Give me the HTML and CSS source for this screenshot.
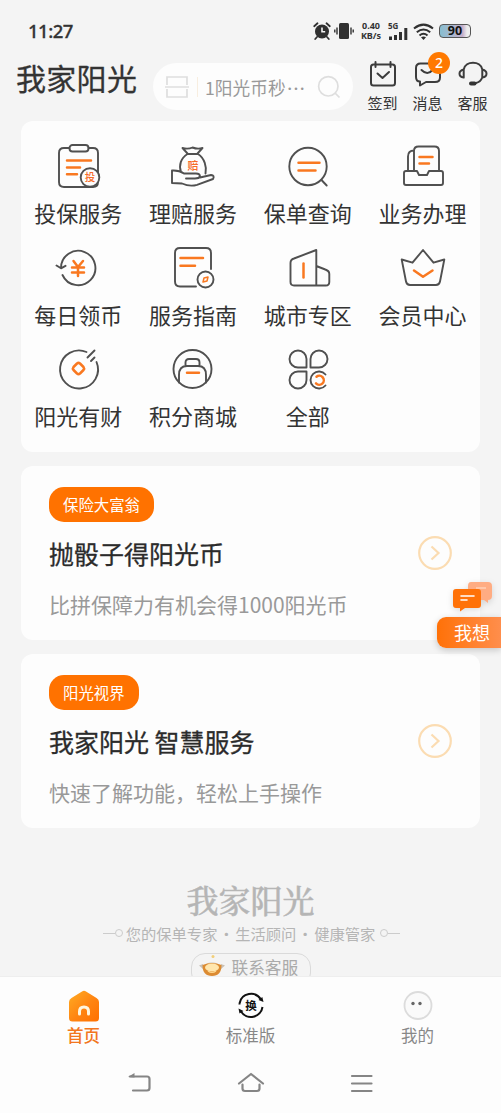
FILE: index.html
```html
<!DOCTYPE html>
<html lang="zh-CN">
<head>
<meta charset="utf-8">
<title>我家阳光</title>
<link rel="stylesheet" href="styles.css">
</head>
<body>
<div class="app">
  <div class="status">
    <span class="time">11:27</span>
    <div class="indicators">
      <svg width="18" height="18" viewBox="0 0 18 18"><circle cx="9" cy="9.5" r="7" fill="#303030"/><path d="M1.2 4.2 4.5 1.3M16.8 4.2 13.5 1.3M4 15l-1.8 2M14 15l1.8 2" stroke="#303030" stroke-width="1.8" stroke-linecap="round"/><path d="M9 5.5v4.2h3.2" fill="none" stroke="#f4f4f4" stroke-width="1.6"/></svg>
      <svg class="vibrate" width="20" height="18" viewBox="0 0 20 18"><rect x="5" y="1" width="10" height="16" rx="1.5" fill="#303030"/><path d="M3 5.5v7M.8 7.5v3M17 5.5v7M19.2 7.5v3" stroke="#303030" stroke-width="1.4"/></svg>
      <div class="speed"><span>0.40</span><span>KB/s</span></div>
      <div class="signal"><span>5G</span><svg width="20" height="12" viewBox="0 0 20 12"><path d="M2.500 8.500V12M7.500 7v5M12.500 4v8M17.800 0v12" stroke="#303030" stroke-width="3"/></svg></div>
      <svg class="wifi" width="21" height="17" viewBox="0 0 21 17"><g fill="none" stroke="#303030" stroke-width="2"><path d="M1 5.500Q10.500-2.300 20 5.500M3.800 9.200Q10.500 3.700 17.200 9.200M6.500 12.400Q10.500 9 14.500 12.400"/></g><path d="M8 14.200Q10.500 12.700 13 14.200L10.500 17Z" fill="#303030"/></svg>
      <span class="battery">90</span>
    </div>
  </div>

  <header class="header">
    <h1>我家阳光</h1>
    <div class="search">
      <svg width="24" height="24" viewBox="0 0 24 24" fill="none" stroke="#dedede" stroke-width="1.7"><path d="M2 10V2h20v8M2 14v8h20v-8M0 12h24"/></svg>
      <i class="divider"></i>
      <span>1阳光币秒<b>···</b></span>
      <svg class="lens" width="24" height="24" viewBox="0 0 24 24" fill="none" stroke="#dedede" stroke-width="1.7"><circle cx="11.3" cy="11.3" r="9.7"/><path d="m18 18 4.5 4.5"/></svg>
    </div>
    <nav class="actions">
      <a><svg width="30" height="30" viewBox="0 0 30 30"><g class="hi"><rect x="3" y="5.500" width="24" height="21" rx="2.500"/><path d="M7.500 3v5M22.500 3v5M9.500 14.500l5 4.500 6.500-6"/></g></svg>签到</a>
      <a><svg width="30" height="30" viewBox="0 0 30 30"><g class="hi"><path d="M17 4.500H7.500Q3 4.500 3 9v9q0 4.500 4 4.500v4l6-3.500h9Q27 23 27 18.500V15M8.500 11q6 6 11 0"/></g></svg>消息<em>2</em></a>
      <a><svg width="30" height="30" viewBox="0 0 30 30"><g class="hi"><path d="M5.700 10.500C7.500 1.500 22.500 1.500 24.300 10.500M5.700 10.500Q1.500 11.500 1.500 14.700T5.700 18.500ZM24.300 10.500q4.200 1 4.200 4.200T24.300 18.500ZM24 19q-1.500 4-6 5"/></g><rect x="11" y="22.500" width="7.500" height="4" rx="2" fill="#333"/></svg>客服</a>
    </nav>
  </header>

  <main>
    <section class="services">
      <a><svg class="ic" viewBox="0 0 52 52"><path d="M17.500 7H12Q7 7 7 12v29q0 5 5 5h29q5 0 5-5V12q0-5-5-5h-4.500"/><rect x="17.500" y="4" width="19" height="6.500" rx="3"/><path class="o" d="M15 19.500h24M15 26.500h13M15 33.300h10"/><circle cx="38" cy="36.500" r="9.300" fill="#fdfdfd"/><text x="38" y="40.300" font-size="10.500">投</text></svg>投保服务</a>
      <a><svg class="ic" viewBox="0 0 52 52"><path d="M20.500 12.500 15.500 7q5.500 1.500 10-.5 5 2 10 .5l-5 5.500M20 13h11M20.500 13C14 17 11.500 24 14 31M31 13c6.500 4 9 13 7.500 19.500M5 29.500V42l10 .500q8 3.500 15 1.300L46 38q2-3.500-2-4l-11 2.500M5 29.500q7-.5 12 3h12q4 0 4 3-1 2-5 2h-9"/><text x="26" y="28.500" font-size="11">赔</text></svg>理赔服务</a>
      <a><svg class="ic" viewBox="0 0 52 52"><circle cx="26" cy="25.500" r="18.700"/><path d="m39.500 39 5.200 5.500"/><path class="o" d="M16.500 21.800h21M16.500 29.600h17"/></svg>保单查询</a>
      <a><svg class="ic" viewBox="0 0 52 52"><path d="M17 30V10q0-4.500 4.500-4.500h16Q42 5.500 42 10v20M17 9.500q-6 0-6 6V30M9 30h11l2 4h8l2-4h12q2 0 2 2v10q0 2-2 2H9q-2 0-2-2V32q0-2 2-2Z"/><path class="o" d="M22.500 16h13M22.500 22.500h9.500"/></svg>业务办理</a>
      <a><svg class="ic" viewBox="0 0 52 52"><path d="M9 25A17.200 17.200 0 1 1 10.500 32M4.500 22.500 9 25.300l4.500-2.500"/><path class="o" d="m21.500 18 4.500 6 5-6M20 24.500h12M20 29.500h12M26 24v9"/></svg>每日领币</a>
      <a><svg class="ic" viewBox="0 0 52 52"><path d="M29 43.500H13Q8 43.500 8 38.500V10Q8 5 13 5h26q5 0 5 5v16"/><circle cx="38.500" cy="36.500" r="8"/><path class="o" d="M13.500 15h22.500M13.500 22.800h14.500"/><path class="o thin" d="m36 39 1-4 4-1-1 4Z"/></svg>服务指南</a>
      <a><svg class="ic" viewBox="0 0 52 52"><path d="M34.300 42.500H12q-3.500 0-3.500-3.500V20q0-3.500 3.500-4.500L34.300 7ZM34.300 23l9 3.500q4 1.300 4 4.500v8q0 3.500-3.500 3.500h-9.500"/><path class="o" d="M21.500 20.500v14"/></svg>城市专区</a>
      <a><svg class="ic" viewBox="0 0 52 52"><path d="M4.700 16.500 15.500 19.700 26 7l10.500 12.700 10.800-3.200L43 38.500q-.7 3.500-4 3.500H13q-3.300 0-4-3.500Z"/><path class="o" d="m17 27.500 9 6.300 9.500-6.300"/></svg>会员中心</a>
      <a><svg class="ic" viewBox="0 0 52 52"><path d="M34.500 8A19 19 0 1 0 44.500 18M35.500 13.500l7-7M39 17l3.500-3.500"/><path class="o" d="m24 20.500 1-1q1.500-1.200 3 0l3.500 3.500q1.200 1.500 0 3l-3.500 3.500q-1.500 1.200-3 0l-3.500-3.500q-1.200-1.500 0-3Z"/></svg>阳光有财</a>
      <a><svg class="ic" viewBox="0 0 52 52"><circle cx="25.500" cy="25" r="19"/><path d="M12 38.500V31q0-9 8-9h11q8 0 8 9v7.500M18.500 22v-3.500q0-3.500 3.500-3.500h7q3.500 0 3.500 3.500V22"/><path class="o" d="M20 28.800h12"/></svg>积分商城</a>
      <a><svg class="ic" viewBox="0 0 52 52"><path d="M24.500 23.500h-8.500a8.500 8.500 0 1 1 8.500-8.500ZM28.500 23.500h8.500a8.500 8.500 0 1 0-8.500-8.500ZM24.500 27.500h-8.500a8.500 8.500 0 1 0 8.500 8.500ZM43.500 30.500A8.500 8.500 0 1 0 43.500 41.500"/><path class="o" d="M34.500 32.700a4.500 4.500 0 1 1-.5 6.600"/></svg>全部</a>
    </section>

    <section class="card">
      <span class="tag">保险大富翁</span>
      <h2>抛骰子得阳光币</h2>
      <p>比拼保障力有机会得1000阳光币</p>
      <svg class="go" viewBox="0 0 36 36"><circle cx="18" cy="18" r="15.800"/><path d="m14.500 11.500 7 6.500-7 6.500"/></svg>
    </section>
    <section class="card">
      <span class="tag">阳光视界</span>
      <h2>我家阳光 智慧服务</h2>
      <p>快速了解功能，轻松上手操作</p>
      <svg class="go" viewBox="0 0 36 36"><circle cx="18" cy="18" r="15.800"/><path d="m14.500 11.500 7 6.500-7 6.500"/></svg>
    </section>

    <footer class="brand">
      <div class="brand-name">我家阳光</div>
      <div class="tagline"><i class="rule left"></i>您的保单专家 · 生活顾问 · 健康管家<i class="rule right"></i></div>
      <div class="contact"><svg width="28" height="26" viewBox="0 0 28 26"><path d="M6 12q8-8 16 0" fill="#dedbd5"/><path d="M1 11.500l4-1.500v5ZM27 11.500l-4-1.500v5Z" fill="#c9c0b5"/><path d="M4.500 11q9.500-4 19 0 0 11-9.500 11T4.500 11Z" fill="#dc8b32"/><ellipse cx="14" cy="13.500" rx="7" ry="4" fill="#ffe6ad"/><path d="M10 17q4 3 8 0" fill="none" stroke="#ffd88f" stroke-width="1.200"/><circle cx="15" cy="2.500" r="1.500" fill="#f2cf79"/></svg>联系客服</div>
    </footer>
  </main>

  <aside class="float">
    <svg width="42" height="32" viewBox="0 0 42 32"><path d="M19 1h17q4 0 4 4v10q0 4-4 4v3l-4-3H19q-3 0-3-4V5q0-4 3-4Z" fill="#ffac82"/><path d="M24 7h10" stroke="#ffd0b6" stroke-width="1.500"/><path d="M4 8h22q3 0 3 3v13q0 3-3 3H13l-5 3.500V27H4q-3 0-3-3V11q0-3 3-3Z" fill="#ff7208"/><path d="M9 15h13M9 19h6" stroke="#fff" stroke-width="1.600" stroke-linecap="round"/></svg>
    <span>我想</span>
  </aside>

  <nav class="tabs">
    <a class="active"><svg width="34" height="34" viewBox="0 0 34 34"><defs><linearGradient id="home" x1="0" y1="0" x2="1" y2="1"><stop stop-color="#ffad24"/><stop offset=".55" stop-color="#ff8411"/><stop offset="1" stop-color="#ff7000"/></linearGradient></defs><path d="M15 2.500q2-1.500 4 0l10.500 6.500q2.500 1.500 2.500 4v16q0 3.500-3.500 3.500h-23Q2 32.500 2 29V13q0-2.500 2.500-4Z" fill="url(#home)"/><path d="M12.500 25v-2.500q0-4.500 4.500-4.500t4.500 4.500V25" fill="none" stroke="#fff6df" stroke-width="3" stroke-linecap="round"/></svg>首页</a>
    <a><svg width="34" height="34" viewBox="0 0 34 34"><g fill="none" stroke="#111" stroke-width="2"><path d="M5.500 14.500A11.700 11.700 0 0 1 27 10.500M28.500 18A11.700 11.700 0 0 1 7 22.500M5.500 14.500v1"/></g><path d="m24.500 11 5 2-1.200-5ZM9.500 22l-5-2.500 1 5Z" fill="#111"/><text x="17" y="21" font-size="11.500" font-weight="700" text-anchor="middle" fill="#111">换</text></svg>标准版</a>
    <a><svg width="34" height="34" viewBox="0 0 34 34"><circle cx="17" cy="16.500" r="13.500" fill="#fafafa" stroke="#dcdcdc" stroke-width="1.800"/><circle cx="12" cy="14.500" r="1.700" fill="#666"/><circle cx="19" cy="14.500" r="1.700" fill="#666"/></svg>我的</a>
  </nav>
  <div class="system">
    <svg viewBox="0 0 28 24"><path d="M4 5.500H21q2.500 0 2.500 2.500v9q0 2.500-2.500 2.500H7"/><path d="M2 6 8.500 2v4.500Z" fill="#858585" stroke="none"/></svg>
    <svg viewBox="0 0 28 24"><path d="m2 12.500 12-9.500 12 9.500M5.500 13.500v4q0 2.500 2.500 2.500h12q2.500 0 2.500-2.500v-4"/></svg>
    <svg viewBox="0 0 28 24"><path d="M4 5h19.500M4 12.500h19.500M4 20h19.500"/></svg>
  </div>
</div>
</body>
</html>
```
FILE: styles.css
```css
* { box-sizing: border-box; }
body { margin: 0; background: #f4f4f4; font-family: "Noto Sans CJK SC", sans-serif; color: #333; }
h1, h2, p { margin: 0; font-weight: 400; }
svg { display: block; flex: none; overflow: visible; }
.app { position: relative; width: 501px; height: 1113px; display: flex; flex-direction: column; overflow: hidden; }

.status { height: 62px; flex: none; display: flex; justify-content: space-between; padding: 0 30px 0 28px; align-items: center; }
.time { font: 500 18.500px/24px "Noto Sans", sans-serif; -webkit-text-stroke: .3px #333; letter-spacing: -.5px; }
.indicators { display: flex; align-items: center; }
.vibrate { margin-left: 3px; }
.speed { width: 24px; margin-left: 5px; display: flex; flex-direction: column; align-items: center; font: 700 9px/10px "Noto Sans", sans-serif; white-space: nowrap; }
.signal { width: 21px; height: 18px; margin-left: 5px; position: relative; padding-top: 6px; }
.signal span { position: absolute; left: 0; top: 0; font: 700 8px/8px "Noto Sans", sans-serif; }
.wifi { margin-left: 4px; }
.battery { width: 32px; height: 14px; margin-left: 5px; border: 1.500px solid #555; border-radius: 4px; background: linear-gradient(90deg, #87bed0, #c5afcb 75%, #eee 90%); font: 700 12.500px/11px "Noto Sans", sans-serif; text-align: center; color: #111; }

.header { height: 59px; flex: none; display: flex; padding-left: 16px; align-items: flex-start; }
h1 { width: 137px; font-size: 30px; line-height: 34px; margin-top: -2px; letter-spacing: .3px; -webkit-text-stroke: .3px #333; white-space: nowrap; }
.search { width: 200px; height: 47px; margin-top: 1px; border-radius: 24px; background: #fdfdfd; display: flex; align-items: center; padding: 0 12px; color: #999; }
.divider { width: 1px; height: 20px; margin: 0 7px 0 8px; background: #f8eee0; }
.search span { font-size: 17.700px; line-height: 24px; white-space: nowrap; flex: 1; }
.search b { font: 600 16px/20px "Noto Sans", sans-serif; letter-spacing: 1.800px; margin-left: 2px; }
.actions { display: flex; padding-left: 7px; }
.actions a { width: 45px; position: relative; display: flex; flex-direction: column; align-items: center; font-size: 15px; line-height: 20px; }
.actions svg { margin-top: -3px; margin-bottom: 4px; }
.hi { fill: none; stroke: #3c3c3c; stroke-width: 2; stroke-linecap: round; stroke-linejoin: round; }
.actions em { position: absolute; left: 23px; top: -10px; width: 22px; height: 22px; border-radius: 50%; background: #ff7900; color: #fff; font: 500 14px/22px "Noto Sans", sans-serif; text-align: center; }

main { flex: 1; min-height: 0; overflow: hidden; padding: 0 21px; display: flex; flex-direction: column; gap: 14px; }
.services { flex: none; height: 331px; border-radius: 12px; background: #fdfdfd; padding-top: 20px; display: grid; grid-template-columns: repeat(4, 1fr); grid-auto-rows: 101.500px; }
.services a { display: flex; flex-direction: column; align-items: center; font-size: 22px; line-height: 30px; gap: 4px; white-space: nowrap; }
.ic { width: 52px; height: 52px; fill: none; stroke: #505050; stroke-width: 1.900; stroke-linejoin: round; stroke-linecap: round; }
.ic .o { stroke: #f97820; stroke-width: 2.500; }
.ic .thin { stroke-width: 1.500; }
.ic text { stroke: none; fill: #f76b28; font-weight: 500; text-anchor: middle; }

.card { position: relative; flex: none; height: 174px; background: #fdfdfd; border-radius: 12px; padding: 21px 28px; display: flex; flex-direction: column; align-items: flex-start; }
.tag { height: 35px; padding: 0 14px; border-radius: 15px; background: #ff7200; color: #fff; font-size: 15.400px; line-height: 35px; }
h2 { font-size: 25px; line-height: 36px; margin-top: 13px; color: #2b2b2b; -webkit-text-stroke: .3px #2b2b2b; white-space: nowrap; }
.card p { font-size: 21px; line-height: 30px; margin-top: 18px; color: #999; white-space: nowrap; }
.go { position: absolute; right: 27px; top: 69px; width: 36px; height: 36px; fill: none; stroke: #fbdcb2; stroke-width: 2.200; }

.brand { flex: none; display: flex; flex-direction: column; align-items: center; padding-top: 37px; color: #b5b5b5; }
.brand-name { font: 500 32px/40px "Noto Serif CJK SC", "Noto Sans CJK SC", serif; -webkit-text-stroke: .5px #b8b8b8; }
.tagline { display: flex; align-items: center; font-size: 15.300px; line-height: 24px; margin-top: 2px; white-space: nowrap; word-spacing: -2.200px; gap: 5px; }
.rule { width: 18px; height: 6px; display: flex; align-items: center; }
.rule::before, .rule::after { content: ""; flex: none; }
.left::before, .right::after { width: 12px; height: 1px; background: #ccc; }
.left::after, .right::before { width: 6px; height: 6px; border: 1px solid #ccc; border-radius: 50%; }
.contact { width: 120px; height: 34px; margin-top: 8px; border: 1.500px solid #dadada; border-radius: 14px; display: flex; align-items: flex-start; padding: 0 6px; gap: 6px; font-size: 16.700px; line-height: 26px; color: #aaa; white-space: nowrap; }

.float { position: absolute; right: 0; top: 581px; width: 64px; }
.float svg { margin-left: 15px; filter: drop-shadow(0 2px 3px #0002); }
.float span { display: block; height: 31px; margin-top: 4px; padding-left: 17px; border-radius: 9px 0 0 9px; background: linear-gradient(90deg, #ff7108, #ff8e4c); box-shadow: 0 2px 7px #0003; color: #fff; font-size: 18px; line-height: 31px; white-space: nowrap; }

.tabs { height: 78px; flex: none; display: grid; grid-template-columns: repeat(3, 1fr); background: #fdfdfd; border-top: 1px solid #eee; padding-top: 12px; }
.tabs a { display: flex; flex-direction: column; align-items: center; font-size: 16.500px; line-height: 24px; color: #888; }
.tabs .active { color: #f27620; font-weight: 500; }
.system { height: 59px; flex: none; display: flex; justify-content: center; gap: 83px; padding-top: 17px; background: #fdfdfd; }
.system svg { width: 28px; height: 24px; fill: none; stroke: #858585; stroke-width: 2.200; stroke-linecap: round; stroke-linejoin: round; }
```
